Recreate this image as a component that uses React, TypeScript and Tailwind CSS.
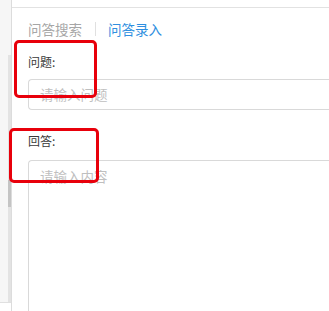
import React from "react";

export default function App() {
  return (
    <div
      className="relative flex w-[329px] h-[311px] overflow-hidden bg-white"
      style={{ fontFamily: '"Noto Sans CJK SC", "Noto Sans", sans-serif' }}
    >
      {/* left strip with scrollbar */}
      <div className="flex w-[12px] shrink-0 flex-col border-r border-[#dcdcdc] bg-[#f6f6f6]">
        <div className="h-[55px]" />
        <div className="ml-[8px] flex w-[3px] flex-1 flex-col bg-[#e3e3e3]">
          <div className="h-[125px]" />
          <div className="h-[27px] bg-[#c4c4c4]" />
        </div>
        <div className="h-[9px] border-t border-[#e0e0e0] bg-white" />
      </div>

      {/* main panel */}
      <div className="flex flex-1 flex-col pt-[7px]">
        <div className="flex flex-1 flex-col border-t border-[#e2e2e2] pl-[16px]">
          <div className="mt-[11px] flex items-center text-[13.5px] leading-[20px]">
            <span className="text-[#a6a6a6]">问答搜索</span>
            <span className="ml-[13px] mr-[12px] h-[14px] w-px bg-[#e0e0e0]" />
            <span className="text-[#2f8fe0]">问答录入</span>
          </div>

          <div className="mt-[15px] text-[12px] leading-[16px] text-[#3a3a3a]">问题:</div>
          <div className="mt-[9px] flex h-[31px] items-center rounded-l-[4px] border border-r-0 border-[#d9d9d9] pl-[11px] text-[13.5px] text-[#bfbfbf]">
            请输入问题
          </div>

          <div className="mt-[23px] text-[12px] leading-[16px] text-[#3a3a3a]">回答:</div>
          <div className="mt-[11px] flex-1 rounded-tl-[4px] border-l border-t border-[#d9d9d9] pl-[11px] pt-[5px] text-[13.5px] leading-[20px] text-[#bfbfbf] -mb-[4px]">
            请输入内容
          </div>
        </div>
      </div>

      {/* annotation boxes */}
      <div className="absolute left-[14px] top-[40px] h-[58px] w-[83px] rounded-[5px] border-[3px] border-[#e8000b]" />
      <div className="absolute left-[9px] top-[128px] h-[55px] w-[90px] rounded-[5px] border-[3px] border-[#e8000b]" />
    </div>
  );
}
